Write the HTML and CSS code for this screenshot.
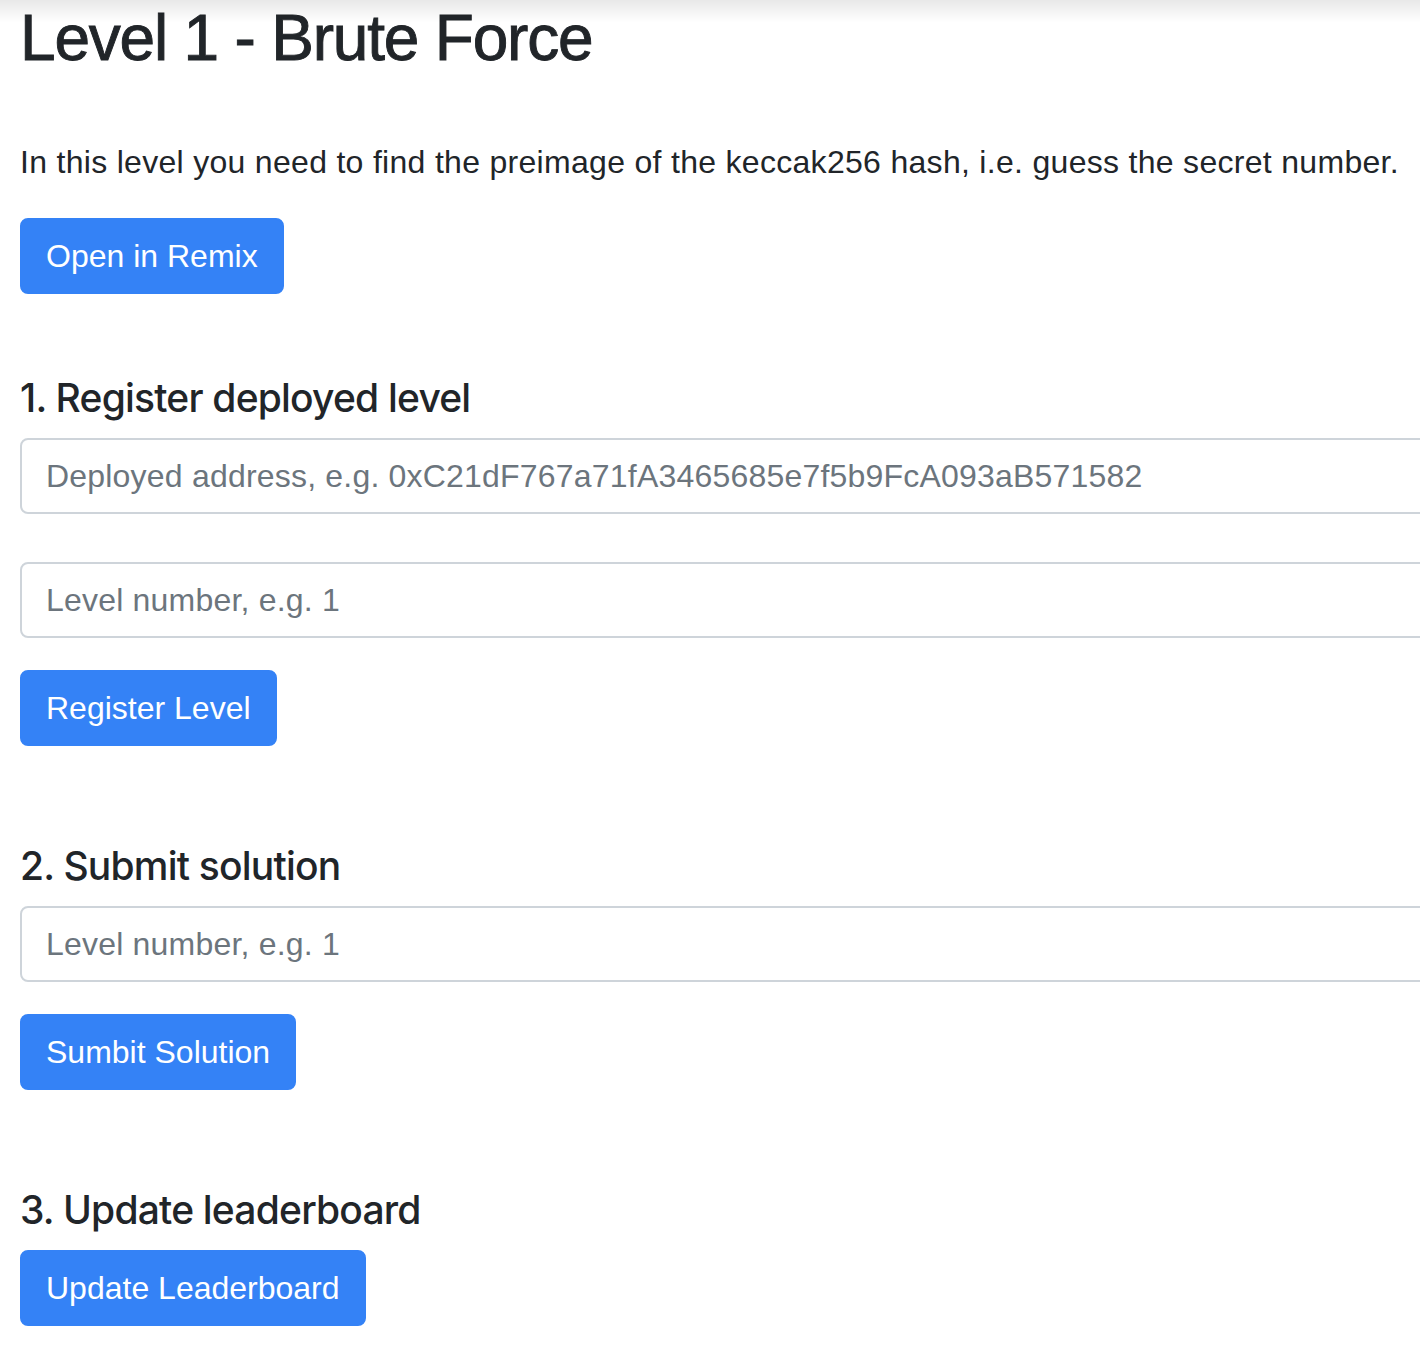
FILE: index.html
```html
<!DOCTYPE html>
<html lang="en">
<head>
<meta charset="utf-8">
<title>Level 1 - Brute Force</title>
<link rel="stylesheet" href="styles.css">
</head>
<body>
<div class="top-shadow"></div>
<main class="page">
  <h2 class="title">Level 1 - Brute Force</h2>
  <p class="intro">In this level you need to find the preimage of the keccak256 hash, i.e. guess the secret number.</p>
  <button class="btn">Open in Remix</button>

  <section class="step step-first">
    <h5 class="step-title">1. Register deployed level</h5>
    <input class="field" type="text" placeholder="Deployed address, e.g. 0xC21dF767a71fA3465685e7f5b9FcA093aB571582">
    <input class="field field-gap" type="text" placeholder="Level number, e.g. 1">
    <button class="btn btn-after-field">Register Level</button>
  </section>

  <section class="step">
    <h5 class="step-title">2. Submit solution</h5>
    <input class="field" type="text" placeholder="Level number, e.g. 1">
    <button class="btn btn-after-field">Sumbit Solution</button>
  </section>

  <section class="step">
    <h5 class="step-title">3. Update leaderboard</h5>
    <button class="btn">Update Leaderboard</button>
  </section>
</main>
</body>
</html>
```

FILE: styles.css
```css
html, body {
  margin: 0;
  padding: 0;
  overflow: hidden;
  background: #ffffff;
}

body {
  font-family: "Liberation Sans", Arial, sans-serif;
  color: #212529;
  font-size: 32px;
  line-height: 48px;
}

.top-shadow {
  position: fixed;
  top: 0;
  left: 0;
  right: 0;
  height: 22px;
  background: linear-gradient(to bottom, rgba(0, 0, 0, 0.09), rgba(0, 0, 0, 0));
  pointer-events: none;
}

.page {
  width: 1460px;
  padding-left: 20px;
  display: flex;
  flex-direction: column;
  align-items: flex-start;
}

.title {
  margin: 0 0 61px 0;
  font-size: 64px;
  line-height: 77px;
  font-weight: 400;
  letter-spacing: -1.2px;
  -webkit-text-stroke: 0.9px #212529;
}

.intro {
  margin: 0 0 32px 0;
  font-size: 32px;
  line-height: 48px;
  letter-spacing: 0.3px;
}

.btn {
  font-family: inherit;
  font-size: 32px;
  line-height: 48px;
  padding: 12px 24px;
  border: 2px solid #3482f6;
  background: #3482f6;
  color: #ffffff;
  border-radius: 8px;
  cursor: pointer;
}

.step {
  display: flex;
  flex-direction: column;
  align-items: flex-start;
  width: 100%;
  margin-top: 96px;
}

.step-first {
  margin-top: 80px;
}

.step-title {
  margin: 0 0 16px 0;
  font-family: Inter, "Liberation Sans", sans-serif;
  font-size: 39px;
  line-height: 48px;
  font-weight: 500;
  letter-spacing: -0.8px;
}

.field {
  box-sizing: border-box;
  width: 100%;
  height: 76px;
  padding: 12px 24px;
  font-family: inherit;
  font-size: 32px;
  line-height: 48px;
  letter-spacing: 0.2px;
  color: #495057;
  border: 2px solid #ced4da;
  border-radius: 8px;
  background: #ffffff;
  outline: none;
}

.field::placeholder {
  color: #6c757d;
  opacity: 1;
}

.field-gap {
  margin-top: 48px;
}

.btn-after-field {
  margin-top: 32px;
}
```
